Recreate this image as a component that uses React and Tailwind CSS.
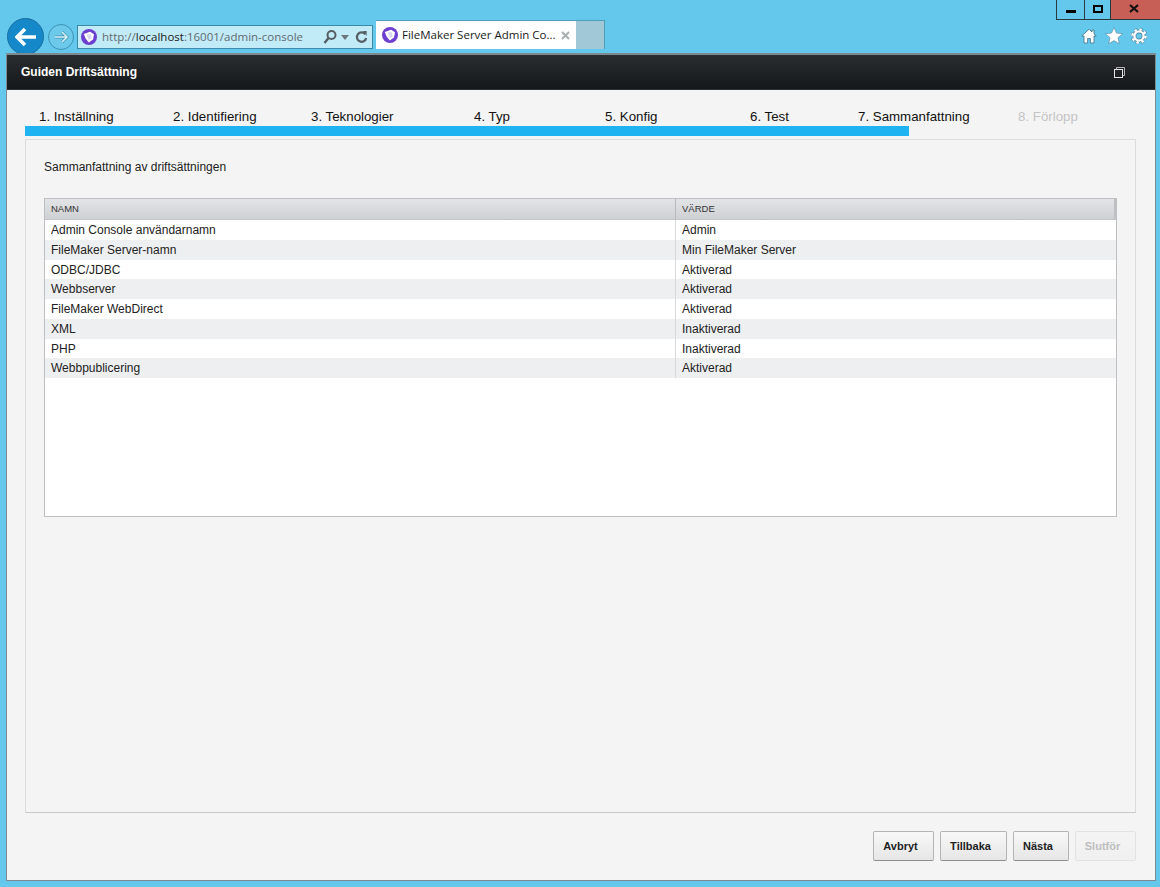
import React from "react";

const steps = ["1. Inställning","2. Identifiering","3. Teknologier","4. Typ","5. Konfig","6. Test","7. Sammanfattning"];
const rows = [
  ["Admin Console användarnamn","Admin"],
  ["FileMaker Server-namn","Min FileMaker Server"],
  ["ODBC/JDBC","Aktiverad"],
  ["Webbserver","Aktiverad"],
  ["FileMaker WebDirect","Aktiverad"],
  ["XML","Inaktiverad"],
  ["PHP","Inaktiverad"],
  ["Webbpublicering","Aktiverad"],
];

function Fav() {
  return (
    <svg width="16" height="16" viewBox="0 0 16 16" className="shrink-0">
      <circle cx="8" cy="8" r="8" fill="#6d3fd0" />
      <path d="M2.8 5 L9 2.8 L13 5.2 L12 10.6 L7.8 13.4 L4.6 9.4 Z" fill="#fff" />
      <path d="M5.6 5.4 L9.6 5 L10.8 9.6 L7.8 11 Z" fill="#dcd6f5" />
    </svg>
  );
}

function Btn({ children, w, disabled }) {
  return (
    <button
      className={
        "h-[30px] rounded-[2px] border pr-[6px] text-[11px] font-bold bg-gradient-to-b " +
        w + " " +
        (disabled
          ? "border-[#e2e2e2] text-[#bdbdbd] from-[#f4f4f4] to-[#f0f0f0]"
          : "border-[#b4b4b4] border-b-[#8f8f8f] text-[#222] from-[#f8f8f8] to-[#e6e6e6]")
      }
    >
      {children}
    </button>
  );
}

export default function App() {
  return (
    <div className="h-[887px] w-[1160px] overflow-hidden bg-[#64c8ec] font-['Liberation_Sans',Arial,sans-serif]">
      {/* browser chrome */}
      <div className="h-[53px]">
        <div className="flex h-[20px] justify-end">
          <div className="flex h-[20px] w-[104px] border border-t-0 border-r-0 border-[#2b3a40]">
            <div className="flex w-[28px] items-end justify-center border-r border-[#2b3a40] pb-[6px]">
              <div className="h-[3px] w-[10px] bg-black" />
            </div>
            <div className="flex w-[26px] items-center justify-center border-r border-[#2b3a40] pb-[2px]">
              <div className="h-[8px] w-[10px] border-2 border-black" />
            </div>
            <div className="flex flex-1 items-center justify-center bg-[#c75f56] pb-[2px] pr-[3px]">
              <svg width="10" height="9" viewBox="0 0 10 9"><path d="M1 1l8 7M9 1L1 8" stroke="#111" strokeWidth="2.2" /></svg>
            </div>
          </div>
        </div>
        <div className="flex h-[33px] items-start pl-[7px]">
          <div className="-mt-[2px] flex h-[37px] w-[37px] shrink-0 items-center justify-center rounded-full border border-[#1b6f9f] bg-[#1488c8]">
            <svg width="22" height="20" viewBox="0 0 22 20"><path d="M10 2L2 10l8 8M3 10h18" fill="none" stroke="#fff" strokeWidth="3.6" /></svg>
          </div>
          <div className="ml-[4px] mt-[4px] flex h-[26px] w-[26px] shrink-0 items-center justify-center rounded-full border border-[#3d93b3] bg-[#6cc9ea]">
            <svg width="16" height="14" viewBox="0 0 16 14"><path d="M9 2l5 5-5 5M14 7H2" fill="none" stroke="#3d93b3" strokeWidth="3" /><path d="M9 2l5 5-5 5M14 7H2" fill="none" stroke="#d6f0f9" strokeWidth="1.6" /></svg>
          </div>
          <div className="ml-[3px] mt-[5px] flex h-[24px] w-[296px] shrink-0 items-center border border-[#3b8ba8] bg-[#c2ebf8] pl-[3px] font-['Open_Sans',sans-serif] text-[11.5px]">
            <Fav />
            <span className="ml-[5px] text-[#5f6a70]">http://</span>
            <span className="text-[#1a1a1a]">localhost</span>
            <span className="text-[#5f6a70]">:16001/admin-console</span>
            <svg width="16" height="16" viewBox="0 0 16 16" className="ml-auto"><circle cx="9.5" cy="6" r="4" fill="none" stroke="#555f63" strokeWidth="2" /><path d="M6.5 9L2.5 14" stroke="#555f63" strokeWidth="2.4" /></svg>
            <svg width="8" height="5" viewBox="0 0 8 5" className="ml-[3px]"><path d="M0 0h8L4 5z" fill="#6d777b" /></svg>
            <svg width="13" height="14" viewBox="0 0 14 14" className="ml-[6px] mr-[4px]"><path d="M11 4a5 5 0 1 0 1 4" fill="none" stroke="#555f63" strokeWidth="2.4" /><path d="M8.5 0.5L12.5 0.5V6z" fill="#555f63" /></svg>
          </div>
          <div className="ml-[3px] flex h-[29px] w-[200px] shrink-0 items-center border-t border-[#4f9fb9] bg-white pl-[6px] pr-[6px] font-['Open_Sans',sans-serif] text-[11.5px] text-[#1a1a1a]">
            <Fav />
            <span className="ml-[4px] whitespace-nowrap">FileMaker Server Admin Co...</span>
            <svg width="9" height="9" viewBox="0 0 9 9" className="ml-auto"><path d="M1 1l7 7M8 1L1 8" stroke="#a9aeb1" strokeWidth="2" /></svg>
          </div>
          <div className="h-[29px] w-[29px] shrink-0 border border-b-0 border-l-0 border-[#4f9fb9] bg-[#a0c8d6]" />
          <div className="ml-auto mt-[7px] flex items-center gap-[8px] pr-[13px]">
            <svg width="16" height="16" viewBox="0 0 16 16" className="-ml-[1px]"><path d="M8 1.2L0.8 8H3v7h3.6v-4.5h2.8V15H13V8h2.2l-2.2-2.1V2h-2v2z" fill="#fff" stroke="#3f6f88" strokeWidth=".8" /></svg>
            <svg width="18" height="17" viewBox="0 0 18 17"><path d="M9 0.5l2.5 5.6 6 .6-4.5 4 1.3 6L9 13.6l-5.3 3.1 1.3-6-4.5-4 6-.6z" fill="#fff" stroke="#46708a" strokeWidth=".5" /></svg>
            <svg width="16" height="16" viewBox="0 0 16 16">
              <circle cx="8" cy="8" r="6.6" fill="none" stroke="#3f6f88" strokeWidth="3.2" strokeDasharray="3 2.2" />
              <circle cx="8" cy="8" r="4.6" fill="none" stroke="#3f6f88" strokeWidth="3.6" />
              <circle cx="8" cy="8" r="6.6" fill="none" stroke="#fff" strokeWidth="2.4" strokeDasharray="2.6 2.6" />
              <circle cx="8" cy="8" r="4.6" fill="none" stroke="#fff" strokeWidth="2.4" />
            </svg>
          </div>
        </div>
      </div>

      {/* window */}
      <div className="relative z-10 ml-[6px] flex h-[828px] w-[1150px] flex-col border border-t-2 border-[#7d8a90] bg-[#f4f4f4]">
        <div className="flex h-[35px] shrink-0 items-center justify-between border-b border-[#2f3133] bg-gradient-to-b from-[#2b2e31] to-[#15181a] pl-[14px] pr-[30px] text-[12px] font-bold text-white">
          <span>Guiden Driftsättning</span>
          <svg width="11" height="11" viewBox="0 0 11 11"><rect x="0.5" y="2.5" width="8" height="8" fill="none" stroke="#e4e4e4" /><path d="M2.5 2V.5h8v8H9" fill="none" stroke="#b5b5b5" /></svg>
        </div>

        <div className="flex min-h-0 flex-1 flex-col px-[18px]">
          <div className="mt-[17px] grid h-[19px] grid-cols-[134px_138px_163px_131px_145px_108px_160px_auto] items-center pl-[14px] text-[13.3px] text-[#111]">
            {steps.map((s) => <span key={s} className="whitespace-nowrap">{s}</span>)}
            <span className="whitespace-nowrap text-[#c4c4c4]">8. Förlopp</span>
          </div>
          <div className="h-[10px] w-[884px] shrink-0 bg-[#1fb4f1]" />

          <div className="mt-[3px] flex h-[674px] w-[1111px] shrink-0 flex-col border border-[#dcdcdc] border-b-[#c8c8c8] px-[18px]">
            <p className="mt-[20px] h-[14px] text-[12px] leading-[14px] text-[#222]">Sammanfattning av driftsättningen</p>
            <div className="mt-[24px] h-[319px] w-[1073px] border border-[#bdbfc2] bg-white">
              <div className="flex h-[21px] border-b border-[#c4c5c8] bg-gradient-to-b from-[#e3e4e6] to-[#cfd0d3] text-[9.5px] leading-[19px] text-[#333]">
                <div className="w-[631px] border-r border-[#b8b9bc] pl-[6px]">NAMN</div>
                <div className="flex-1 border-r-2 border-[#bdbfc2] pl-[6px]">VÄRDE</div>
              </div>
              {rows.map(([a, b], i) => (
                <div key={a} className={"flex h-[19.75px] text-[12px] leading-[20.75px] text-[#222] " + (i % 2 ? "bg-[#eeeff1]" : "bg-white")}>
                  <div className="w-[631px] border-r border-[#d8d9db] pl-[6px]">{a}</div>
                  <div className="flex-1 pl-[6px]">{b}</div>
                </div>
              ))}
            </div>
          </div>

          <div className="mt-[18px] flex w-[1111px] justify-end gap-[6px]">
            <Btn w="w-[61px]">Avbryt</Btn>
            <Btn w="w-[67px]">Tillbaka</Btn>
            <Btn w="w-[56px]">Nästa</Btn>
            <Btn w="w-[61px]" disabled>Slutför</Btn>
          </div>
        </div>
      </div>
    </div>
  );
}
